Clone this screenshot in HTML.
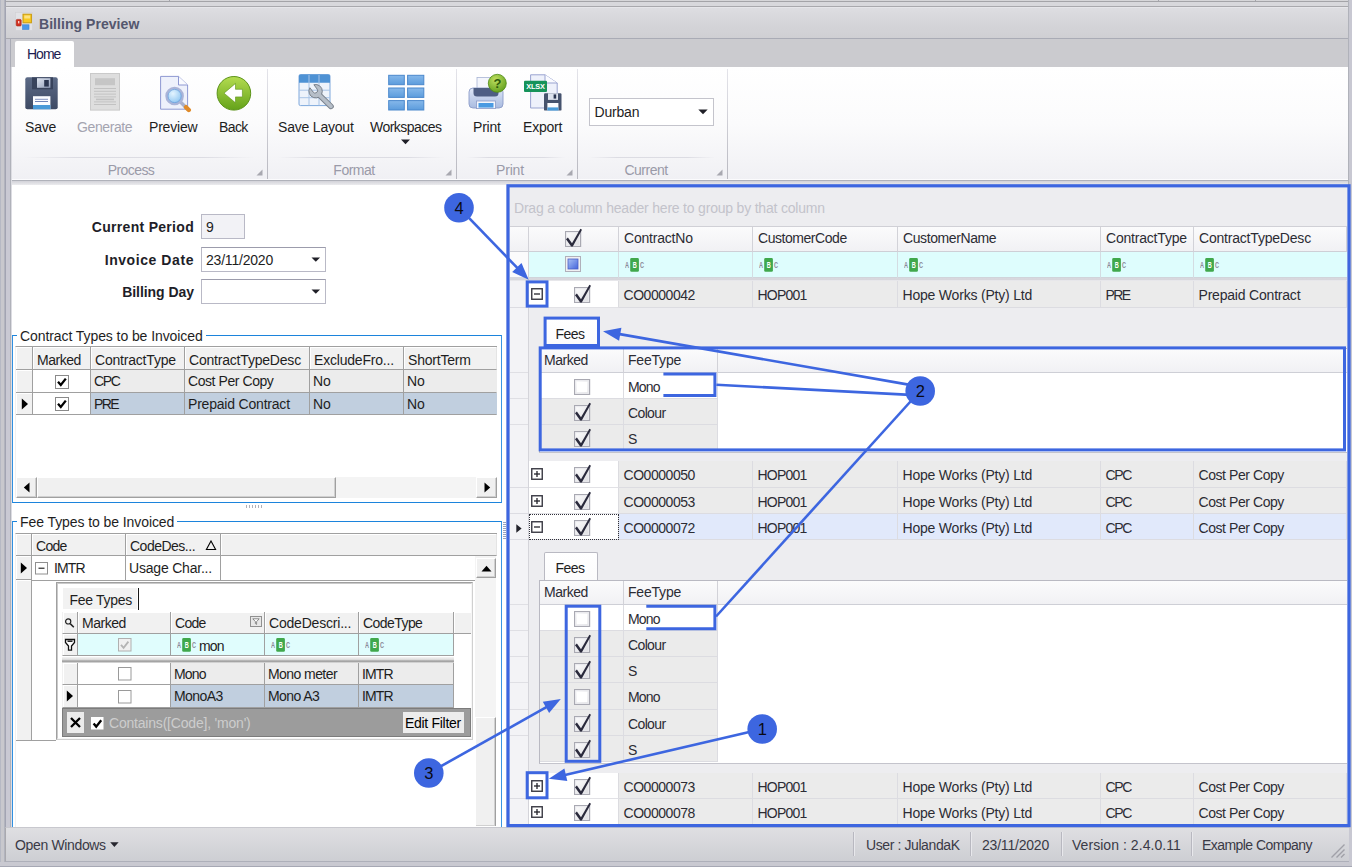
<!DOCTYPE html>
<html lang="en">
<head>
<meta charset="utf-8">
<title>Billing Preview</title>
<style>
*{box-sizing:border-box;margin:0;padding:0}
html,body{width:1352px;height:867px;overflow:hidden;background:#c8c8cd}
body{font-family:"Liberation Sans",sans-serif;font-size:13.5px;color:#1e1e1e;position:relative}
.a{position:absolute}
.t{position:absolute;white-space:nowrap;line-height:16px;height:16px}
.b{font-weight:bold}
/* frame */
#topstrip{left:5px;top:0;width:1343px;height:7px;background:#d8d8dc;border-top:1px solid #d6d6d9}
#title{left:5px;top:7px;width:1344px;height:32px;background:linear-gradient(#dedee2,#d6d6da 45%,#cfcfd3);border-left:1px solid #a9a9ae;border-right:1px solid #a9a9ae;border-bottom:1px solid #aaaab0;box-shadow:inset 0 1px 0 #e6e6ea}
#tabband{left:10px;top:39px;width:1338px;height:28px;background:#cbcbcf}
#ribbon{left:12px;top:67px;width:1336px;height:114px;background:linear-gradient(#ffffff,#fbfbfc 50%,#f0f0f4);border-bottom:1px solid #b0b2ba;box-shadow:inset 0 -1px 0 #fbfbfd}
#left{left:12px;top:183px;width:494px;height:644px;background:linear-gradient(#e4e4e8,#fff 2px)}
#right{left:506px;top:184px;width:842px;height:643px;background:#ececef}
#status{left:5px;top:827px;width:1344px;height:35px;background:linear-gradient(#dfdfe2,#cdced3);border-top:1px solid #c8c8ce;border-bottom:1px solid #aeb0ba;border-left:1px solid #a9a9ae}
.rsep{top:69px;width:1px;height:110px;background:linear-gradient(#e4e4ea,#b8b8c0)}
.rline{top:157px;height:1px;background:linear-gradient(90deg,rgba(220,220,228,0),#dcdce3 22%,#dcdce3 78%,rgba(220,220,228,0))}
.rcap{top:162px;text-align:center;color:#9a9aa8}
.rl{top:119px}
body{letter-spacing:-0.2px;font-size:14px}
.fl{text-align:right;font-size:14px;letter-spacing:0.3px;color:#1e1e28}
.ed{width:125px;height:25px;background:#fff;border:1px solid #b9b9c6;border-top-color:#9c9cac}
.gb{border:1px solid #1c84dc;border-left-color:#2f8fe0;border-right-color:#3a96e2}
.wh{background:#f1f1f1;border-right:1px solid #a0a0a0;border-bottom:1px solid #a0a0a0;box-shadow:inset 1px 1px 0 #fff}
.wh span,.wc span{position:absolute;left:4px;top:4.500px;line-height:16px;white-space:nowrap}
.wc{border-right:1px solid #a0a0a0;border-bottom:1px solid #a0a0a0}
.wc span{left:3px;top:3px}
.g1{background:#ececec}.g2{background:#c1cfdf}
.sbb{background:#f0f0f0;border:1px solid #fff;border-right-color:#a0a0a0;border-bottom-color:#a0a0a0;box-shadow:inset -1px -1px 0 #d0d0d0}
.vl{width:1px;background:#a0a0a0}
.dh{background:linear-gradient(#fbfbfc,#f1f1f4);border-right:1px solid #d2d2d8;border-bottom:1px solid #cecfd6}
.dh span,.dc span{position:absolute;left:5px;top:3px;line-height:16px;white-space:nowrap;color:#2c2c34}
.dc{background:#ebebeb;border-right:1px solid #dcdce1;border-bottom:1px solid #dcdce1}
.dc span{left:4.500px;top:5.500px}
.fo{background:#e1e9fb}
#status{z-index:5}
.st{z-index:6;color:#3a3a46}
.ss{top:832px;width:1px;height:24px;background:#b8b8c0;z-index:6;box-shadow:1px 0 0 #e8e8ec}
</style>
</head>
<body>
<div class="a" id="topstrip"></div>
<div class="a" id="title"></div>
<div class="a" id="tabband"></div>
<div class="a" id="ribbon"></div>
<div class="a" id="left"></div>
<div class="a" id="right"></div>
<div class="a" id="status"></div>
<!-- title -->
<div class="a" style="left:6px;top:39px;width:4px;height:788px;background:#c9c9d3"></div>
<div class="a" style="left:10px;top:67px;width:1px;height:760px;background:#b0b2ba"></div>
<div class="a" style="left:11px;top:67px;width:1px;height:760px;background:#dcdce2"></div>
<div class="a" style="left:0;top:0;width:1px;height:867px;background:#b6b9c4"></div>
<div class="a" style="left:4px;top:0;width:1px;height:867px;background:#b2b4be"></div>
<div class="a" style="left:5px;top:0;width:1px;height:867px;background:#a2a4b2"></div>
<div class="a" style="left:5px;top:1px;width:1343px;height:1px;background:#a4a4a8"></div>
<div class="a" style="left:5px;top:6px;width:1343px;height:1px;background:#a9a9ad"></div>
<div class="a" style="left:1348px;top:0;width:1px;height:867px;background:#b0b2ba"></div>
<div class="a" style="left:1349px;top:0;width:3px;height:867px;background:#c8c8d2"></div>
<div class="a" style="left:12px;top:181px;width:1336px;height:4px;background:linear-gradient(#d2d2d8,#ececee)"></div>
<div class="a" style="left:169px;top:0;width:1px;height:1px;background:#a4a4aa"></div><div class="a" style="left:1158px;top:0;width:1px;height:1px;background:#a4a4aa"></div><div class="a" style="left:1255px;top:0;width:1px;height:1px;background:#a4a4aa"></div>
<svg class="a" style="left:15px;top:12px" width="18" height="20" viewBox="0 0 18 20">
 <rect x="0.5" y="0.5" width="17" height="18" fill="#e2e2e6" stroke="#d0d0d4" stroke-width="0.6"/>
 <rect x="8" y="2.2" width="8.4" height="8.6" fill="#f8c820" stroke="#c89a10" stroke-width="1"/>
 <rect x="9.3" y="3.5" width="5.8" height="3" fill="#fde89a" opacity=".8"/>
 <rect x="1.2" y="7.4" width="5" height="6.6" rx="1" fill="#d03020" stroke="#a82818" stroke-width=".6"/>
 <rect x="3" y="9" width="1.4" height="2.4" fill="#fbd0c8"/>
 <rect x="7.6" y="12.8" width="6.4" height="4.6" fill="#4a98e8" stroke="#3a80d0" stroke-width=".6"/>
</svg>
<div class="t b" style="left:39px;top:15.5px;font-size:14px;color:#54576e;letter-spacing:0.05px">Billing Preview</div>
<!-- tab -->
<div class="a" style="left:10px;top:38px;width:1338px;height:1px;background:#a9abb5"></div>
<div class="a" style="left:10px;top:39px;width:1px;height:28px;background:#a9abb5"></div>
<div class="a" style="left:15px;top:41px;width:59px;height:27px;background:#fff;border-radius:2px 2px 0 0"></div>
<div class="t" style="letter-spacing:-1px;left:27px;top:46px;color:#1c1c50">Home</div>
<!-- ribbon groups -->
<div class="a rsep" style="left:267px"></div>
<div class="a rsep" style="left:456px"></div>
<div class="a rsep" style="left:577px"></div>
<div class="a rsep" style="left:727px"></div>
<div class="a rline" style="left:24px;width:230px"></div>
<div class="a rline" style="left:278px;width:166px"></div>
<div class="a rline" style="left:467px;width:98px"></div>
<div class="a rline" style="left:589px;width:126px"></div>
<div class="t rcap" style="letter-spacing:-0.6px;left:81px;width:100px">Process</div>
<div class="t rcap" style="letter-spacing:-0.5px;left:304px;width:100px">Format</div>
<div class="t rcap" style="left:460px;width:100px">Print</div>
<div class="t rcap" style="letter-spacing:-0.5px;left:596px;width:100px">Current</div>
<svg class="a" style="left:256px;top:169px" width="7" height="7"><path d="M6.5 0.5V6.5H0.5Z" fill="#a8a8b0"/></svg>
<svg class="a" style="left:445px;top:169px" width="7" height="7"><path d="M6.5 0.5V6.5H0.5Z" fill="#a8a8b0"/></svg>
<svg class="a" style="left:566px;top:169px" width="7" height="7"><path d="M6.5 0.5V6.5H0.5Z" fill="#a8a8b0"/></svg>
<svg class="a" style="left:716px;top:169px" width="7" height="7"><path d="M6.5 0.5V6.5H0.5Z" fill="#a8a8b0"/></svg>
<!-- labels -->
<div class="t rl" style="left:25px">Save</div>
<div class="t rl" style="letter-spacing:-0.4px;left:77px;color:#a4a4b0">Generate</div>
<div class="t rl" style="left:149px">Preview</div>
<div class="t rl" style="letter-spacing:-0.6px;left:219px">Back</div>
<div class="t rl" style="left:278px">Save Layout</div>
<div class="t rl" style="letter-spacing:-0.52px;left:370px">Workspaces</div>
<div class="t rl" style="left:473px">Print</div>
<div class="t rl" style="left:523px">Export</div>
<svg class="a" style="left:401px;top:139px" width="9" height="6"><path d="M0 0.5H9L4.5 5.2Z" fill="#202028"/></svg>
<!-- Save icon -->
<svg class="a" style="left:25px;top:77px" width="33" height="33" viewBox="0 0 33 33">
 <defs><linearGradient id="gsv" x1="0" y1="0" x2="0" y2="1"><stop offset="0" stop-color="#5c6a86"/><stop offset="1" stop-color="#3e4a64"/></linearGradient>
 <linearGradient id="gsm" x1="0" y1="0" x2="1" y2="1"><stop offset="0" stop-color="#dfe5f0"/><stop offset="1" stop-color="#8f9cb8"/></linearGradient></defs>
 <rect x="0.3" y="0.3" width="32.4" height="32" rx="2" fill="url(#gsv)"/>
 <rect x="7" y="0.3" width="21" height="12" fill="#38435c"/>
 <rect x="12" y="1.2" width="13.4" height="9.6" fill="url(#gsm)"/>
 <rect x="19.2" y="3" width="4.6" height="6.6" fill="#2a3550"/>
 <rect x="8" y="19.2" width="17.4" height="13.1" fill="#fbfcff"/>
 <rect x="8" y="28" width="17.4" height="4.3" fill="#4a9ad8"/>
 <rect x="10" y="21.8" width="13" height="1" fill="#8494c0"/>
 <rect x="10" y="24" width="13" height="1" fill="#7084b8"/>
</svg>
<!-- Generate icon -->
<svg class="a" style="left:90px;top:73px" width="30" height="38" viewBox="0 0 30 38">
 <rect x="0.5" y="0.5" width="29" height="36.6" fill="#dedede" stroke="#cacaca"/>
 <rect x="5" y="5.2" width="20" height="7" fill="#c6c6c6"/>
 <g fill="#c2c2c2"><rect x="4" y="15" width="22" height="1"/><rect x="4" y="17.8" width="22" height="1"/><rect x="4" y="20.6" width="22" height="1"/><rect x="4" y="23.4" width="22" height="1"/><rect x="6" y="25.6" width="18" height="1.6"/><rect x="4" y="28.4" width="22" height="1"/><rect x="4" y="31" width="22" height="1"/></g>
</svg>
<!-- Preview icon -->
<svg class="a" style="left:159px;top:75px" width="34" height="38" viewBox="0 0 34 38">
 <defs><radialGradient id="gln" cx=".4" cy=".35" r=".7"><stop offset="0" stop-color="#e4f4ff"/><stop offset="1" stop-color="#84c0f0"/></radialGradient></defs>
 <path d="M1.6 1.4H19.5L28.6 10V34.2H1.6Z" fill="#eef1fb" stroke="#8e98d2" stroke-width="1"/>
 <path d="M19.5 1.4V10H28.6" fill="#fafbff" stroke="#8e98d2" stroke-width="1"/>
 <line x1="22" y1="27.5" x2="29" y2="34.5" stroke="#a8b0cc" stroke-width="3.4" stroke-linecap="round"/>
 <line x1="27" y1="32.2" x2="29.8" y2="35" stroke="#e08a28" stroke-width="4.4" stroke-linecap="round"/>
 <circle cx="15.6" cy="21" r="8.1" fill="url(#gln)" stroke="#aab4d8" stroke-width="2.4"/>
 <circle cx="15.6" cy="21" r="6.6" fill="none" stroke="#6c9cd8" stroke-width=".8"/>
</svg>
<!-- Back icon -->
<svg class="a" style="left:216px;top:75px" width="36" height="37" viewBox="0 0 36 37">
 <defs><linearGradient id="gbk" x1="0" y1="0" x2="0" y2="1"><stop offset="0" stop-color="#b4dc50"/><stop offset="1" stop-color="#64a21a"/></linearGradient></defs>
 <circle cx="17.9" cy="18.3" r="16.8" fill="url(#gbk)" stroke="#5c941a" stroke-width="1"/>
 <path d="M8 18.2L19.5 8.4V14.3H26.4V21.9H19.5V27.8Z" fill="#fff" stroke="#5a9018" stroke-width=".6"/>
</svg>
<!-- Save Layout icon -->
<svg class="a" style="left:298px;top:74px" width="37" height="36" viewBox="0 0 37 36">
 <rect x="1" y="0.6" width="31" height="31" rx="1.5" fill="#eef3fb" stroke="#7ea8dc" stroke-width="1"/>
 <path d="M1 2Q1 .6 2.5 .6H30.5Q32 .6 32 2V8.8H1Z" fill="#4e92d4"/>
 <g stroke="#a9c4e6" stroke-width="1"><line x1="11" y1="1" x2="11" y2="31.4"/><line x1="21" y1="1" x2="21" y2="31.4"/><line x1="1" y1="16.2" x2="32" y2="16.2"/><line x1="1" y1="23.7" x2="32" y2="23.7"/></g>
 <line x1="20.5" y1="20.2" x2="33" y2="32.4" stroke="#79818c" stroke-width="5.600" stroke-linecap="round"/><path d="M15.87 10.73A6.7 6.7 0 1 1 11.87 13.73L15.12 18.06A2.5 2.5 0 0 0 19.12 15.06Z" fill="#b6bec8" stroke="#79818c" stroke-width="1"/><line x1="20.5" y1="20.2" x2="33" y2="32.4" stroke="#b6bec8" stroke-width="3.700" stroke-linecap="round"/>
</svg>
<!-- Workspaces icon -->
<svg class="a" style="left:388px;top:74px" width="37" height="37" viewBox="0 0 37 37">
 <defs><linearGradient id="gws" x1="0" y1="0" x2="0" y2="1"><stop offset="0" stop-color="#86b8ea"/><stop offset="1" stop-color="#5c9cdc"/></linearGradient></defs>
 <g fill="url(#gws)" stroke="#4a88cc" stroke-width="1">
 <rect x="0.7" y="1.3" width="15.6" height="9.4"/><rect x="19.6" y="1.3" width="16.2" height="9.4"/>
 <rect x="0.7" y="14" width="15.6" height="9.4"/><rect x="19.6" y="14" width="16.2" height="9.4"/>
 <rect x="0.7" y="26.6" width="15.6" height="9.4"/><rect x="19.6" y="26.6" width="16.2" height="9.4"/></g>
</svg>
<!-- Print icon -->
<svg class="a" style="left:468px;top:73px" width="40" height="38" viewBox="0 0 40 38">
 <defs><linearGradient id="gpr" x1="0" y1="0" x2="0" y2="1"><stop offset="0" stop-color="#dfe7f7"/><stop offset="1" stop-color="#a9bbe0"/></linearGradient>
 <radialGradient id="gq" cx=".4" cy=".3" r=".8"><stop offset="0" stop-color="#c0e060"/><stop offset="1" stop-color="#5a9a18"/></radialGradient></defs>
 <rect x="9" y="4.4" width="18" height="13" fill="#f4f6fc" stroke="#a8b4d4" stroke-width=".8"/>
 <rect x="1" y="15" width="34" height="20" rx="4" fill="url(#gpr)" stroke="#8c9cc8" stroke-width=".9"/>
 <path d="M5.5 15H30.5V20Q30.5 23.6 27 23.6H9Q5.500 23.6 5.500 20Z" fill="#4e5e84"/>
 <rect x="8.500" y="28" width="19" height="7.6" fill="#f4f6fc" stroke="#8c9cc8" stroke-width=".8"/>
 <rect x="10.5" y="30" width="15" height="4.600" fill="#4a9ae2"/>
 <circle cx="29.3" cy="10.3" r="9" fill="url(#gq)" stroke="#4e8a14" stroke-width=".8"/>
 <text x="29.3" y="15" font-family="Liberation Sans,sans-serif" font-size="13" font-weight="bold" text-anchor="middle" fill="#2e5a0c">?</text>
</svg>
<!-- Export icon -->
<svg class="a" style="left:523px;top:74px" width="40" height="38" viewBox="0 0 40 38">
 <path d="M7.600 .8H22L34.2 9V34H7.600Z" fill="#eef1fb" stroke="#99a3d0" stroke-width="1"/>
 <path d="M22 .8V9H34.2" fill="#fafbff" stroke="#99a3d0" stroke-width="1"/>
 <rect x="1" y="6.800" width="23" height="11.2" rx="1" fill="#16935a"/>
 <text x="3.200" y="15.200" font-family="Liberation Sans,sans-serif" font-size="7.600" font-weight="bold" fill="#fff" lengthAdjust="spacingAndGlyphs" textLength="18.400">XLSX</text>
 <rect x="21" y="19.3" width="17.5" height="17.3" rx="1.2" fill="#46536e"/>
 <rect x="25" y="19.3" width="10" height="6.600" fill="#dde3ee"/>
 <rect x="30.6" y="20.4" width="2.600" height="4.200" fill="#2a3550"/>
 <rect x="24.4" y="29" width="11" height="7.600" fill="#fbfcff"/>
 <rect x="24.4" y="33.4" width="11" height="3.200" fill="#4a9ad8"/>
</svg>
<!-- combo -->
<div class="a" style="left:589px;top:98px;width:125px;height:28px;background:#fff;border:1px solid #c4c4cc"></div>
<div class="t" style="left:594.500px;top:104px">Durban</div>
<svg class="a" style="left:698px;top:109px" width="10" height="6"><path d="M0.3 0.5H9.700L5 5.3Z" fill="#202028"/></svg>
<!-- form -->
<div class="t b fl" style="left:41px;top:219px;width:153px">Current Period</div>
<div class="t b fl" style="letter-spacing:0.57px;left:41px;top:251.500px;width:153px">Invoice Date</div>
<div class="t b fl" style="letter-spacing:-0.05px;left:41px;top:284px;width:153px">Billing Day</div>
<div class="a" style="left:201px;top:214px;width:44px;height:25px;background:#f2f2f6;border:1px solid #b9b9c6"></div>
<div class="a ed" style="left:201px;top:247px"></div>
<div class="a ed" style="left:201px;top:279px"></div>
<div class="t" style="left:206px;top:219px">9</div>
<div class="t" style="left:206px;top:252px">23/11/2020</div>
<svg class="a" style="left:311px;top:257px" width="10" height="6"><path d="M0.5 0.4H9.1L4.8 4.800Z" fill="#202028"/></svg>
<svg class="a" style="left:311px;top:289px" width="10" height="6"><path d="M0.5 0.4H9.1L4.8 4.800Z" fill="#202028"/></svg>
<!-- group 1 -->
<div class="a gb" style="left:12px;top:335px;width:490px;height:168px"></div>
<div class="t" style="left:17px;top:328px;background:#fff;padding:0 3px;letter-spacing:-0.08px">Contract Types to be Invoiced</div>
<div class="a" style="left:15px;top:346px;width:482px;height:152px;background:#fff;border-top:1px solid #a0a0a0;border-left:1px solid #f1f1f1"></div>
<!-- header -->
<div class="a wh" style="left:16px;top:347px;width:17px;height:23px"></div>
<div class="a wh" style="left:33px;top:347px;width:58px;height:23px"><span style="letter-spacing:-0.48px">Marked</span></div>
<div class="a wh" style="left:91px;top:347px;width:94px;height:23px"><span>ContractType</span></div>
<div class="a wh" style="left:185px;top:347px;width:125px;height:23px"><span>ContractTypeDesc</span></div>
<div class="a wh" style="left:310px;top:347px;width:94px;height:23px"><span>ExcludeFro...</span></div>
<div class="a wh" style="left:404px;top:347px;width:93px;height:23px;border-right-color:#e4e4e4"><span>ShortTerm</span></div>
<!-- row1 -->
<div class="a wh" style="left:16px;top:370px;width:17px;height:23px"></div>
<div class="a wc" style="left:33px;top:370px;width:58px;height:23px;background:#fff"></div>
<div class="a wc g1" style="left:91px;top:370px;width:94px;height:23px"><span style="letter-spacing:-1.4px">CPC</span></div>
<div class="a wc g1" style="left:185px;top:370px;width:125px;height:23px"><span style="letter-spacing:-0.43px">Cost Per Copy</span></div>
<div class="a wc g1" style="left:310px;top:370px;width:94px;height:23px"><span>No</span></div>
<div class="a wc g1" style="left:404px;top:370px;width:93px;height:23px;border-right-color:#ececec"><span>No</span></div>
<!-- row2 -->
<div class="a wh" style="left:16px;top:393px;width:17px;height:22px"></div>
<div class="a wc" style="left:33px;top:393px;width:58px;height:22px;background:#fff"></div>
<div class="a wc g2" style="left:91px;top:393px;width:94px;height:22px"><span style="letter-spacing:-1.6px">PRE</span></div>
<div class="a wc g2" style="left:185px;top:393px;width:125px;height:22px"><span>Prepaid Contract</span></div>
<div class="a wc g2" style="left:310px;top:393px;width:94px;height:22px"><span>No</span></div>
<div class="a wc g2" style="left:404px;top:393px;width:93px;height:22px;border-right-color:#c1cfdf"><span>No</span></div>
<svg class="a" style="left:21px;top:398px" width="8" height="12"><path d="M0.8 0.6L7 6L0.8 11.4Z" fill="#000"/></svg>
<svg class="a ck" style="left:55px;top:375px" width="14" height="14"><rect x=".5" y=".5" width="13" height="13" fill="#fff" stroke="#8a8a8a"/><path d="M3 6.800L5.800 10L10.800 3.600" fill="none" stroke="#000" stroke-width="2.300"/></svg>
<svg class="a ck" style="left:55px;top:397px" width="14" height="14"><rect x=".5" y=".5" width="13" height="13" fill="#fff" stroke="#8a8a8a"/><path d="M3 6.800L5.800 10L10.800 3.600" fill="none" stroke="#000" stroke-width="2.300"/></svg>
<!-- hscroll -->
<div class="a" style="left:16px;top:477px;width:481px;height:21px;background:#f4f4f4"></div>
<div class="a sbb" style="left:16px;top:477px;width:21px;height:21px"></div>
<div class="a sbb" style="left:37px;top:477px;width:299px;height:21px"></div>
<div class="a sbb" style="left:476px;top:477px;width:21px;height:21px"></div>
<svg class="a" style="left:23px;top:482px" width="7" height="11"><path d="M6.500 0.5L0.8 5.500L6.500 10.500Z" fill="#000"/></svg>
<svg class="a" style="left:484px;top:482px" width="7" height="11"><path d="M0.5 0.5L6.200 5.500L0.5 10.500Z" fill="#000"/></svg>
<!-- splitter grips -->
<div class="a" style="left:246px;top:505px;width:17px;height:3px;background:repeating-linear-gradient(90deg,#b0b0b8 0 1px,#fff 1px 3px)"></div>
<div class="a" style="left:503px;top:522px;width:3px;height:17px;background:repeating-linear-gradient(180deg,#9aa2bc 0 1px,#fff 1px 2px)"></div>
<!-- group 2 -->
<div class="a gb" style="left:12px;top:521px;width:490px;height:320px"></div>
<div class="t" style="left:17px;top:514px;background:#fff;padding:0 3px;letter-spacing:-0.08px">Fee Types to be Invoiced</div>
<div class="a" style="left:15px;top:533px;width:482px;height:294px;background:#fff;border-top:1px solid #a0a0a0;border-left:1px solid #f1f1f1"></div>
<div class="a wh" style="left:16px;top:534px;width:16px;height:22px"></div>
<div class="a wh" style="left:32px;top:534px;width:94px;height:22px"><span style="letter-spacing:-0.7px;top:3.500px">Code</span></div>
<div class="a wh" style="left:126px;top:534px;width:95px;height:22px"><span style="letter-spacing:-0.5px;top:3.500px">CodeDes...</span></div>
<div class="a wh" style="left:221px;top:534px;width:276px;height:22px;border-right-color:#e4e4e4"></div>
<svg class="a" style="left:205px;top:540px" width="12" height="11"><path d="M6 1L10.600 9.500H1.400Z" fill="none" stroke="#000" stroke-width="1.100"/></svg>
<div class="a wh" style="left:16px;top:556px;width:16px;height:24px"></div>
<div class="a wh" style="left:16px;top:580px;width:16px;height:161px;border-bottom-color:#a0a0a0"></div>
<div class="a" style="left:32px;top:740px;width:24px;height:1px;background:#a0a0a0"></div>
<div class="a" style="left:125px;top:556px;width:1px;height:24px;background:#a0a0a0"></div>
<div class="a" style="left:220px;top:556px;width:1px;height:24px;background:#a0a0a0"></div>
<svg class="a" style="left:20px;top:562px" width="8" height="12"><path d="M0.8 0.6L7 6L0.8 11.4Z" fill="#000"/></svg>
<svg class="a" style="left:35px;top:562px" width="13" height="13"><rect x=".5" y=".5" width="12" height="11.500" fill="#fff" stroke="#909090"/><path d="M3.500 6.200H9.500" stroke="#000" stroke-width="1"/></svg>
<div class="t" style="letter-spacing:-0.9px;left:54px;top:560px">IMTR</div>
<div class="t" style="left:129px;top:560px">Usage Char...</div>
<!-- vscroll -->
<div class="a" style="left:475px;top:556px;width:21px;height:270px;background:#f4f4f4"></div>
<div class="a sbb" style="left:476px;top:558px;width:20px;height:20px"></div>
<div class="a sbb" style="left:475px;top:717px;width:21px;height:109px;border-bottom:0"></div>
<svg class="a" style="left:480.500px;top:564.500px" width="11" height="7"><path d="M0.5 6.500L5.500 0.8L10.500 6.500Z" fill="#000"/></svg>
<!-- detail panel -->
<div class="a" style="left:32px;top:580px;width:443px;height:1px;background:#a0a0a0"></div>
<div class="a" style="left:56px;top:582px;width:417px;height:158px;background:#fff;border:1px solid #a0a0a0;border-right-color:#d0d0d0;border-bottom-color:#d0d0d0"></div>
<div class="a" style="left:57px;top:583px;width:415px;height:156px;border:1px solid #696969;border-right-color:#e8e8e8;border-bottom-color:#e8e8e8;opacity:.35"></div>
<div class="a" style="left:63px;top:588px;width:74px;height:21px;background:#f2f2f2"></div><div class="a" style="left:137.500px;top:588px;width:1.500px;height:22px;background:#181818"></div>
<div class="t" style="left:69.500px;top:591.500px;letter-spacing:-0.3px">Fee Types</div>
<!-- detail header -->
<div class="a wh" style="left:62px;top:612px;width:16px;height:22px;border-left:1px solid #f1f1f1"></div>
<div class="a wh" style="left:78px;top:612px;width:93px;height:22px"><span style="letter-spacing:-0.48px;top:2.500px">Marked</span></div>
<div class="a wh" style="left:171px;top:612px;width:94px;height:22px"><span style="letter-spacing:-0.7px;top:2.500px">Code</span></div>
<div class="a wh" style="left:265px;top:612px;width:94px;height:22px"><span style="top:2.500px">CodeDescri...</span></div>
<div class="a wh" style="left:359px;top:612px;width:95px;height:22px"><span style="letter-spacing:-0.56px;top:2.500px">CodeType</span></div>
<div class="a wh" style="left:454px;top:612px;width:17px;height:22px;border-right:0"></div>
<svg class="a" style="left:64px;top:617px" width="12" height="12"><circle cx="4.200" cy="4.400" r="2.600" fill="none" stroke="#202020" stroke-width="1.200"/><path d="M6.200 6.600L9.800 10.200" stroke="#202020" stroke-width="1.500"/></svg>
<svg class="a" style="left:250px;top:616px" width="12" height="11"><rect x=".5" y=".5" width="11" height="10" fill="#e8e8e8" stroke="#909090"/><path d="M2.800 2.800H9.200L6.600 5.600V8.400L5.400 7.600V5.600Z" fill="#fff" stroke="#707070" stroke-width=".8"/></svg>
<!-- filter row -->
<div class="a" style="left:78px;top:634px;width:376px;height:22px;background:#e0fdfd;border-bottom:1px solid #a0a0a0"></div>
<div class="a wh" style="left:62px;top:634px;width:16px;height:22px;border-left:1px solid #f1f1f1"></div>
<div class="a vl" style="left:170px;top:634px;height:22px"></div>
<div class="a vl" style="left:264px;top:634px;height:22px"></div>
<div class="a vl" style="left:358px;top:634px;height:22px"></div>
<div class="a vl" style="left:453px;top:634px;height:22px"></div>
<svg class="a" style="left:64px;top:638px" width="12" height="14"><path d="M1.500 1.500H10.500V4.500L7.500 8V12.200H4.500V8L1.500 4.500Z" fill="#fff" stroke="#101010" stroke-width="1.300"/><path d="M3.500 3.200H8.500" stroke="#101010" stroke-width="1.400"/></svg>
<svg class="a" style="left:118px;top:638px" width="14" height="14"><rect x=".5" y=".5" width="12.500" height="12.500" fill="#f0f0f0" stroke="#b0b0b0"/><path d="M3 6.800L5.600 9.800L10.400 3.600" fill="none" stroke="#b4b4b4" stroke-width="1.800"/></svg>
<svg class="a" style="left:177.300px;top:638.200px" width="20" height="14"><rect x="5.200" y=".1" width="8.700" height="13.700" rx="1.300" fill="#40a84c"/><text x="0" y="10" font-family="Liberation Sans,sans-serif" font-size="8.400" font-weight="bold" lengthAdjust="spacingAndGlyphs" textLength="3.900" fill="#8a8a98">A</text><text x="7.700" y="10" font-family="Liberation Sans,sans-serif" font-size="8.400" font-weight="bold" lengthAdjust="spacingAndGlyphs" textLength="3.900" fill="#fff">B</text><text x="15.100" y="10" font-family="Liberation Sans,sans-serif" font-size="8.400" font-weight="bold" lengthAdjust="spacingAndGlyphs" textLength="3.900" fill="#8a8a98">C</text></svg>
<svg class="a" style="left:271.300px;top:638.200px" width="20" height="14"><rect x="5.200" y=".1" width="8.700" height="13.700" rx="1.300" fill="#40a84c"/><text x="0" y="10" font-family="Liberation Sans,sans-serif" font-size="8.400" font-weight="bold" lengthAdjust="spacingAndGlyphs" textLength="3.900" fill="#8a8a98">A</text><text x="7.700" y="10" font-family="Liberation Sans,sans-serif" font-size="8.400" font-weight="bold" lengthAdjust="spacingAndGlyphs" textLength="3.900" fill="#fff">B</text><text x="15.100" y="10" font-family="Liberation Sans,sans-serif" font-size="8.400" font-weight="bold" lengthAdjust="spacingAndGlyphs" textLength="3.900" fill="#8a8a98">C</text></svg>
<svg class="a" style="left:365.300px;top:638.200px" width="20" height="14"><rect x="5.200" y=".1" width="8.700" height="13.700" rx="1.300" fill="#40a84c"/><text x="0" y="10" font-family="Liberation Sans,sans-serif" font-size="8.400" font-weight="bold" lengthAdjust="spacingAndGlyphs" textLength="3.900" fill="#8a8a98">A</text><text x="7.700" y="10" font-family="Liberation Sans,sans-serif" font-size="8.400" font-weight="bold" lengthAdjust="spacingAndGlyphs" textLength="3.900" fill="#fff">B</text><text x="15.100" y="10" font-family="Liberation Sans,sans-serif" font-size="8.400" font-weight="bold" lengthAdjust="spacingAndGlyphs" textLength="3.900" fill="#8a8a98">C</text></svg>
<div class="t" style="letter-spacing:-0.9px;left:199px;top:637.500px">mon</div>
<!-- sep -->
<div class="a" style="left:62px;top:657px;width:392px;height:6px;background:linear-gradient(#f4f4f4,#e0e0e0 40%,#9a9a9a 70%,#b8b8b8 85%,#f0f0f0)"></div>
<!-- rows -->
<div class="a wh" style="left:62px;top:663px;width:16px;height:22px;border-left:1px solid #f1f1f1"></div>
<div class="a wc" style="left:78px;top:663px;width:93px;height:22px;background:#fff"></div>
<div class="a wc g1" style="left:171px;top:663px;width:94px;height:22px"><span style="letter-spacing:-0.8px">Mono</span></div>
<div class="a wc g1" style="left:265px;top:663px;width:94px;height:22px"><span style="letter-spacing:-0.57px">Mono meter</span></div>
<div class="a wc g1" style="left:359px;top:663px;width:95px;height:22px"><span style="letter-spacing:-0.9px">IMTR</span></div>
<div class="a wh" style="left:62px;top:685px;width:16px;height:23px;border-left:1px solid #f1f1f1"></div>
<div class="a wc" style="left:78px;top:685px;width:93px;height:23px;background:#fff"></div>
<div class="a wc g2" style="left:171px;top:685px;width:94px;height:23px"><span style="letter-spacing:-0.55px">MonoA3</span></div>
<div class="a wc g2" style="left:265px;top:685px;width:94px;height:23px"><span style="letter-spacing:-0.6px">Mono A3</span></div>
<div class="a wc g2" style="left:359px;top:685px;width:95px;height:23px"><span style="letter-spacing:-0.9px">IMTR</span></div>
<svg class="a" style="left:66px;top:690px" width="8" height="12"><path d="M0.8 0.6L7 6L0.8 11.4Z" fill="#000"/></svg>
<svg class="a" style="left:118px;top:667px" width="14" height="14"><rect x=".5" y=".5" width="12.500" height="12.500" fill="#fff" stroke="#9a9a9a"/></svg>
<svg class="a" style="left:118px;top:690px" width="14" height="14"><rect x=".5" y=".5" width="12.500" height="12.500" fill="#fff" stroke="#9a9a9a"/></svg>
<!-- filter panel -->
<div class="a" style="left:62px;top:708px;width:409px;height:29px;background:#9c9c9c;border:1px solid #7c7c7c"></div>
<div class="a" style="left:67px;top:712px;width:17px;height:21px;background:#ececec"></div>
<svg class="a" style="left:70px;top:717px" width="11" height="11"><path d="M1 1L10 10M10 1L1 10" stroke="#000" stroke-width="2.300"/></svg>
<svg class="a" style="left:91px;top:717px" width="13" height="13"><rect x="0" y="0" width="12.500" height="12.500" fill="#fff"/><path d="M2.600 6.400L5.200 9.600L10.200 3.200" fill="none" stroke="#000" stroke-width="2.300"/></svg>
<div class="t" style="left:109px;top:714.500px;color:#cdcdcd">Contains([Code], 'mon')</div>
<div class="a" style="left:403px;top:712px;width:61px;height:21px;background:#ececec"></div>
<div class="t" style="left:405px;top:714.500px;color:#000;letter-spacing:-0.3px">Edit Filter</div>
<div class="a" style="left:510px;top:187px;width:837px;height:637px;background:#ededf0"></div>
<div class="t" style="left:514px;top:199.500px;color:#c3c3cb">Drag a column header here to group by that column</div>
<div class="a" style="left:510px;top:226px;width:19px;height:598px;background:#f3f3f6;border-right:1px solid #d4d4da"></div>
<div class="a" style="left:510px;top:226px;width:837px;height:1px;background:#d0d0d6"></div>
<div class="a dh" style="left:510px;top:227px;width:19px;height:25px"></div>
<div class="a dh" style="left:529px;top:227px;width:90px;height:25px"></div>
<div class="a dh" style="left:619px;top:227px;width:134px;height:25px"><span>ContractNo</span></div>
<div class="a dh" style="left:753px;top:227px;width:145px;height:25px"><span style="letter-spacing:-0.45px">CustomerCode</span></div>
<div class="a dh" style="left:898px;top:227px;width:203px;height:25px"><span style="letter-spacing:-0.4px">CustomerName</span></div>
<div class="a dh" style="left:1101px;top:227px;width:93px;height:25px"><span>ContractType</span></div>
<div class="a dh" style="left:1194px;top:227px;width:153px;height:25px"><span>ContractTypeDesc</span></div>
<svg class="a" style="left:565px;top:227px" width="19" height="21"><defs><linearGradient id="gck" x1="0" y1="0" x2="1" y2="1"><stop offset="0" stop-color="#ffffff"/><stop offset="1" stop-color="#dcdce0"/></linearGradient></defs><rect x=".6" y="4.600" width="15" height="14.800" fill="url(#gck)" stroke="#a9a9b2" stroke-width="1.200"/><rect x="1.700" y="5.700" width="12.800" height="12.600" fill="none" stroke="#ebebef"/><path d="M1 12.200L2.900 10.600L7 16.200L15.400 1.800L17 2.800L7.800 19.400H6.200Z" fill="#2a2a3c"/></svg>
<div class="a" style="left:529px;top:252px;width:818px;height:26px;background:#defdfd;border-bottom:1px solid #d0d4da"></div>
<div class="a" style="left:510px;top:252px;width:18px;height:26px;background:#fbfbfc;border-bottom:1px solid #d8d8de"></div>
<div class="a" style="left:618px;top:252px;width:1px;height:26px;background:#d4dce2"></div>
<div class="a" style="left:752px;top:252px;width:1px;height:26px;background:#d4dce2"></div>
<div class="a" style="left:897px;top:252px;width:1px;height:26px;background:#d4dce2"></div>
<div class="a" style="left:1100px;top:252px;width:1px;height:26px;background:#d4dce2"></div>
<div class="a" style="left:1193px;top:252px;width:1px;height:26px;background:#d4dce2"></div>
<svg class="a" style="left:625px;top:258px" width="20" height="14"><rect x="5.200" y=".1" width="8.700" height="13.700" rx="1.300" fill="#40a84c"/><text x="0" y="10" font-family="Liberation Sans,sans-serif" font-size="8.400" font-weight="bold" lengthAdjust="spacingAndGlyphs" textLength="3.900" fill="#8a8a98">A</text><text x="7.700" y="10" font-family="Liberation Sans,sans-serif" font-size="8.400" font-weight="bold" lengthAdjust="spacingAndGlyphs" textLength="3.900" fill="#fff">B</text><text x="15.100" y="10" font-family="Liberation Sans,sans-serif" font-size="8.400" font-weight="bold" lengthAdjust="spacingAndGlyphs" textLength="3.900" fill="#8a8a98">C</text></svg>
<svg class="a" style="left:759px;top:258px" width="20" height="14"><rect x="5.200" y=".1" width="8.700" height="13.700" rx="1.300" fill="#40a84c"/><text x="0" y="10" font-family="Liberation Sans,sans-serif" font-size="8.400" font-weight="bold" lengthAdjust="spacingAndGlyphs" textLength="3.900" fill="#8a8a98">A</text><text x="7.700" y="10" font-family="Liberation Sans,sans-serif" font-size="8.400" font-weight="bold" lengthAdjust="spacingAndGlyphs" textLength="3.900" fill="#fff">B</text><text x="15.100" y="10" font-family="Liberation Sans,sans-serif" font-size="8.400" font-weight="bold" lengthAdjust="spacingAndGlyphs" textLength="3.900" fill="#8a8a98">C</text></svg>
<svg class="a" style="left:904px;top:258px" width="20" height="14"><rect x="5.200" y=".1" width="8.700" height="13.700" rx="1.300" fill="#40a84c"/><text x="0" y="10" font-family="Liberation Sans,sans-serif" font-size="8.400" font-weight="bold" lengthAdjust="spacingAndGlyphs" textLength="3.900" fill="#8a8a98">A</text><text x="7.700" y="10" font-family="Liberation Sans,sans-serif" font-size="8.400" font-weight="bold" lengthAdjust="spacingAndGlyphs" textLength="3.900" fill="#fff">B</text><text x="15.100" y="10" font-family="Liberation Sans,sans-serif" font-size="8.400" font-weight="bold" lengthAdjust="spacingAndGlyphs" textLength="3.900" fill="#8a8a98">C</text></svg>
<svg class="a" style="left:1107px;top:258px" width="20" height="14"><rect x="5.200" y=".1" width="8.700" height="13.700" rx="1.300" fill="#40a84c"/><text x="0" y="10" font-family="Liberation Sans,sans-serif" font-size="8.400" font-weight="bold" lengthAdjust="spacingAndGlyphs" textLength="3.900" fill="#8a8a98">A</text><text x="7.700" y="10" font-family="Liberation Sans,sans-serif" font-size="8.400" font-weight="bold" lengthAdjust="spacingAndGlyphs" textLength="3.900" fill="#fff">B</text><text x="15.100" y="10" font-family="Liberation Sans,sans-serif" font-size="8.400" font-weight="bold" lengthAdjust="spacingAndGlyphs" textLength="3.900" fill="#8a8a98">C</text></svg>
<svg class="a" style="left:1200px;top:258px" width="20" height="14"><rect x="5.200" y=".1" width="8.700" height="13.700" rx="1.300" fill="#40a84c"/><text x="0" y="10" font-family="Liberation Sans,sans-serif" font-size="8.400" font-weight="bold" lengthAdjust="spacingAndGlyphs" textLength="3.900" fill="#8a8a98">A</text><text x="7.700" y="10" font-family="Liberation Sans,sans-serif" font-size="8.400" font-weight="bold" lengthAdjust="spacingAndGlyphs" textLength="3.900" fill="#fff">B</text><text x="15.100" y="10" font-family="Liberation Sans,sans-serif" font-size="8.400" font-weight="bold" lengthAdjust="spacingAndGlyphs" textLength="3.900" fill="#8a8a98">C</text></svg>
<svg class="a" style="left:565px;top:256px" width="17" height="17"><defs><linearGradient id="gbl" x1="0" y1="0" x2="1" y2="1"><stop offset="0" stop-color="#a8c0f4"/><stop offset="1" stop-color="#4464dc"/></linearGradient></defs><rect x=".5" y=".5" width="15" height="15" fill="#f0f0f2" stroke="#b0b0ba"/><rect x="3" y="3" width="10" height="10" fill="url(#gbl)" stroke="#4a60c8" stroke-width=".8"/></svg>
<div class="a" style="left:510px;top:278px;width:837px;height:3px;background:linear-gradient(#dcdce2,#d2d2d8 40%,#efeff2)"></div>
<div class="a" style="left:510px;top:307px;width:18px;height:1px;background:#dcdce2"></div>
<div class="a" style="left:529px;top:281px;width:90px;height:27px;background:#fff;border-bottom:1px solid #e2e2e6;border-right:1px solid #dcdce0"></div>
<div class="a dc" style="left:619px;top:281px;width:134px;height:27px"><span style="letter-spacing:-0.46px">CO0000042</span></div>
<div class="a dc" style="left:753px;top:281px;width:145px;height:27px"><span style="letter-spacing:-0.77px">HOP001</span></div>
<div class="a dc" style="left:898px;top:281px;width:203px;height:27px"><span>Hope Works (Pty) Ltd</span></div>
<div class="a dc" style="left:1101px;top:281px;width:93px;height:27px"><span style="letter-spacing:-1.6px">PRE</span></div>
<div class="a dc" style="left:1194px;top:281px;width:153px;height:27px"><span>Prepaid Contract</span></div>
<svg class="a" style="left:531px;top:288px" width="12" height="12"><rect x=".75" y=".75" width="10.500" height="10.500" fill="#fff" stroke="#3a3a44" stroke-width="1.400"/><path d="M3 6H9" stroke="#22222a" stroke-width="1.300"/></svg>
<svg class="a" style="left:574px;top:282.5px" width="19" height="21"><defs><linearGradient id="gck" x1="0" y1="0" x2="1" y2="1"><stop offset="0" stop-color="#ffffff"/><stop offset="1" stop-color="#dcdce0"/></linearGradient></defs><rect x=".6" y="4.600" width="15" height="14.800" fill="url(#gck)" stroke="#a9a9b2" stroke-width="1.200"/><rect x="1.700" y="5.700" width="12.800" height="12.600" fill="none" stroke="#ebebef"/><path d="M1 12.200L2.900 10.600L7 16.200L15.400 1.800L17 2.800L7.800 19.400H6.200Z" fill="#2a2a3c"/></svg>
<div class="a" style="left:510px;top:487px;width:18px;height:1px;background:#dcdce2"></div>
<div class="a" style="left:529px;top:461px;width:90px;height:27px;background:#fff;border-bottom:1px solid #e2e2e6;border-right:1px solid #dcdce0"></div>
<div class="a dc" style="left:619px;top:461px;width:134px;height:27px"><span style="letter-spacing:-0.46px">CO0000050</span></div>
<div class="a dc" style="left:753px;top:461px;width:145px;height:27px"><span style="letter-spacing:-0.77px">HOP001</span></div>
<div class="a dc" style="left:898px;top:461px;width:203px;height:27px"><span>Hope Works (Pty) Ltd</span></div>
<div class="a dc" style="left:1101px;top:461px;width:93px;height:27px"><span style="letter-spacing:-1.4px">CPC</span></div>
<div class="a dc" style="left:1194px;top:461px;width:153px;height:27px"><span style="letter-spacing:-0.43px">Cost Per Copy</span></div>
<svg class="a" style="left:531px;top:468px" width="12" height="12"><rect x=".75" y=".75" width="10.500" height="10.500" fill="#fff" stroke="#3a3a44" stroke-width="1.400"/><path d="M3 6H9" stroke="#22222a" stroke-width="1.300"/><path d="M6 3V9" stroke="#22222a" stroke-width="1.300"/></svg>
<svg class="a" style="left:574px;top:462.5px" width="19" height="21"><defs><linearGradient id="gck" x1="0" y1="0" x2="1" y2="1"><stop offset="0" stop-color="#ffffff"/><stop offset="1" stop-color="#dcdce0"/></linearGradient></defs><rect x=".6" y="4.600" width="15" height="14.800" fill="url(#gck)" stroke="#a9a9b2" stroke-width="1.200"/><rect x="1.700" y="5.700" width="12.800" height="12.600" fill="none" stroke="#ebebef"/><path d="M1 12.200L2.900 10.600L7 16.200L15.400 1.800L17 2.800L7.800 19.400H6.200Z" fill="#2a2a3c"/></svg>
<div class="a" style="left:510px;top:513px;width:18px;height:1px;background:#dcdce2"></div>
<div class="a" style="left:529px;top:488px;width:90px;height:26px;background:#fff;border-bottom:1px solid #e2e2e6;border-right:1px solid #dcdce0"></div>
<div class="a dc" style="left:619px;top:488px;width:134px;height:26px"><span style="letter-spacing:-0.46px">CO0000053</span></div>
<div class="a dc" style="left:753px;top:488px;width:145px;height:26px"><span style="letter-spacing:-0.77px">HOP001</span></div>
<div class="a dc" style="left:898px;top:488px;width:203px;height:26px"><span>Hope Works (Pty) Ltd</span></div>
<div class="a dc" style="left:1101px;top:488px;width:93px;height:26px"><span style="letter-spacing:-1.4px">CPC</span></div>
<div class="a dc" style="left:1194px;top:488px;width:153px;height:26px"><span style="letter-spacing:-0.43px">Cost Per Copy</span></div>
<svg class="a" style="left:531px;top:495px" width="12" height="12"><rect x=".75" y=".75" width="10.500" height="10.500" fill="#fff" stroke="#3a3a44" stroke-width="1.400"/><path d="M3 6H9" stroke="#22222a" stroke-width="1.300"/><path d="M6 3V9" stroke="#22222a" stroke-width="1.300"/></svg>
<svg class="a" style="left:574px;top:489.5px" width="19" height="21"><defs><linearGradient id="gck" x1="0" y1="0" x2="1" y2="1"><stop offset="0" stop-color="#ffffff"/><stop offset="1" stop-color="#dcdce0"/></linearGradient></defs><rect x=".6" y="4.600" width="15" height="14.800" fill="url(#gck)" stroke="#a9a9b2" stroke-width="1.200"/><rect x="1.700" y="5.700" width="12.800" height="12.600" fill="none" stroke="#ebebef"/><path d="M1 12.200L2.900 10.600L7 16.200L15.400 1.800L17 2.800L7.800 19.400H6.200Z" fill="#2a2a3c"/></svg>
<div class="a" style="left:510px;top:539px;width:18px;height:1px;background:#dcdce2"></div>
<div class="a" style="left:529px;top:514px;width:90px;height:26px;background:#fff;border-bottom:1px solid #e2e2e6;border-right:1px solid #dcdce0"></div>
<div class="a dc fo" style="left:619px;top:514px;width:134px;height:26px"><span style="letter-spacing:-0.46px">CO0000072</span></div>
<div class="a dc fo" style="left:753px;top:514px;width:145px;height:26px"><span style="letter-spacing:-0.77px">HOP001</span></div>
<div class="a dc fo" style="left:898px;top:514px;width:203px;height:26px"><span>Hope Works (Pty) Ltd</span></div>
<div class="a dc fo" style="left:1101px;top:514px;width:93px;height:26px"><span style="letter-spacing:-1.4px">CPC</span></div>
<div class="a dc fo" style="left:1194px;top:514px;width:153px;height:26px"><span style="letter-spacing:-0.43px">Cost Per Copy</span></div>
<svg class="a" style="left:531px;top:521px" width="12" height="12"><rect x=".75" y=".75" width="10.500" height="10.500" fill="#fff" stroke="#3a3a44" stroke-width="1.400"/><path d="M3 6H9" stroke="#22222a" stroke-width="1.300"/></svg>
<svg class="a" style="left:574px;top:515.5px" width="19" height="21"><defs><linearGradient id="gck" x1="0" y1="0" x2="1" y2="1"><stop offset="0" stop-color="#ffffff"/><stop offset="1" stop-color="#dcdce0"/></linearGradient></defs><rect x=".6" y="4.600" width="15" height="14.800" fill="url(#gck)" stroke="#a9a9b2" stroke-width="1.200"/><rect x="1.700" y="5.700" width="12.800" height="12.600" fill="none" stroke="#ebebef"/><path d="M1 12.200L2.900 10.600L7 16.200L15.400 1.800L17 2.800L7.800 19.400H6.200Z" fill="#2a2a3c"/></svg>
<div class="a" style="left:529px;top:514px;width:90px;height:26px;border:1.500px dotted #30303a"></div>
<svg class="a" style="left:516px;top:524px" width="6" height="9"><path d="M0.300 0.300L5.600 4.500L0.300 8.700Z" fill="#22222a"/></svg>
<div class="a" style="left:510px;top:798px;width:18px;height:1px;background:#dcdce2"></div>
<div class="a" style="left:529px;top:773px;width:90px;height:26px;background:#fff;border-bottom:1px solid #e2e2e6;border-right:1px solid #dcdce0"></div>
<div class="a dc" style="left:619px;top:773px;width:134px;height:26px"><span style="letter-spacing:-0.46px">CO0000073</span></div>
<div class="a dc" style="left:753px;top:773px;width:145px;height:26px"><span style="letter-spacing:-0.77px">HOP001</span></div>
<div class="a dc" style="left:898px;top:773px;width:203px;height:26px"><span>Hope Works (Pty) Ltd</span></div>
<div class="a dc" style="left:1101px;top:773px;width:93px;height:26px"><span style="letter-spacing:-1.4px">CPC</span></div>
<div class="a dc" style="left:1194px;top:773px;width:153px;height:26px"><span style="letter-spacing:-0.43px">Cost Per Copy</span></div>
<svg class="a" style="left:531px;top:780px" width="12" height="12"><rect x=".75" y=".75" width="10.500" height="10.500" fill="#fff" stroke="#3a3a44" stroke-width="1.400"/><path d="M3 6H9" stroke="#22222a" stroke-width="1.300"/><path d="M6 3V9" stroke="#22222a" stroke-width="1.300"/></svg>
<svg class="a" style="left:574px;top:774.5px" width="19" height="21"><defs><linearGradient id="gck" x1="0" y1="0" x2="1" y2="1"><stop offset="0" stop-color="#ffffff"/><stop offset="1" stop-color="#dcdce0"/></linearGradient></defs><rect x=".6" y="4.600" width="15" height="14.800" fill="url(#gck)" stroke="#a9a9b2" stroke-width="1.200"/><rect x="1.700" y="5.700" width="12.800" height="12.600" fill="none" stroke="#ebebef"/><path d="M1 12.200L2.900 10.600L7 16.200L15.400 1.800L17 2.800L7.800 19.400H6.200Z" fill="#2a2a3c"/></svg>
<div class="a" style="left:510px;top:824px;width:18px;height:1px;background:#dcdce2"></div>
<div class="a" style="left:529px;top:799px;width:90px;height:26px;background:#fff;border-bottom:1px solid #e2e2e6;border-right:1px solid #dcdce0"></div>
<div class="a dc" style="left:619px;top:799px;width:134px;height:26px"><span style="letter-spacing:-0.46px">CO0000078</span></div>
<div class="a dc" style="left:753px;top:799px;width:145px;height:26px"><span style="letter-spacing:-0.77px">HOP001</span></div>
<div class="a dc" style="left:898px;top:799px;width:203px;height:26px"><span>Hope Works (Pty) Ltd</span></div>
<div class="a dc" style="left:1101px;top:799px;width:93px;height:26px"><span style="letter-spacing:-1.4px">CPC</span></div>
<div class="a dc" style="left:1194px;top:799px;width:153px;height:26px"><span style="letter-spacing:-0.43px">Cost Per Copy</span></div>
<svg class="a" style="left:531px;top:806px" width="12" height="12"><rect x=".75" y=".75" width="10.500" height="10.500" fill="#fff" stroke="#3a3a44" stroke-width="1.400"/><path d="M3 6H9" stroke="#22222a" stroke-width="1.300"/><path d="M6 3V9" stroke="#22222a" stroke-width="1.300"/></svg>
<svg class="a" style="left:574px;top:800.5px" width="19" height="21"><defs><linearGradient id="gck" x1="0" y1="0" x2="1" y2="1"><stop offset="0" stop-color="#ffffff"/><stop offset="1" stop-color="#dcdce0"/></linearGradient></defs><rect x=".6" y="4.600" width="15" height="14.800" fill="url(#gck)" stroke="#a9a9b2" stroke-width="1.200"/><rect x="1.700" y="5.700" width="12.800" height="12.600" fill="none" stroke="#ebebef"/><path d="M1 12.200L2.900 10.600L7 16.200L15.400 1.800L17 2.800L7.800 19.400H6.200Z" fill="#2a2a3c"/></svg>
<div class="a" style="left:544px;top:318px;width:54px;height:31px;background:linear-gradient(#fff,#fbfbfc);border:1px solid #b9b9c2;border-bottom:0;border-radius:2px 2px 0 0"></div>
<div class="t" style="left:555.500px;top:326px;letter-spacing:-0.5px">Fees</div>
<div class="a" style="left:539px;top:348px;width:808px;height:105px;background:#fff;border-left:1px solid #b9b9c2;border-top:1px solid #b9b9c2;border-bottom:1px solid #c4c4cc"></div>
<div class="a dh" style="left:540px;top:349px;width:84px;height:24px"><span style="letter-spacing:-0.48px;left:4px">Marked</span></div>
<div class="a dh" style="left:624px;top:349px;width:94px;height:24px"><span style="left:4px">FeeType</span></div>
<div class="a dh" style="left:718px;top:349px;width:629px;height:24px;border-right:0"></div>
<div class="a dc" style="left:540px;top:373px;width:84px;height:26px;background:#fff"></div>
<div class="a dc" style="left:624px;top:373px;width:94px;height:26px;background:#fff"><span style="letter-spacing:-0.8px;left:4px">Mono</span></div>
<svg class="a" style="left:574px;top:374.5px" width="19" height="21"><defs><linearGradient id="gck" x1="0" y1="0" x2="1" y2="1"><stop offset="0" stop-color="#ffffff"/><stop offset="1" stop-color="#dcdce0"/></linearGradient></defs><rect x=".6" y="4.600" width="15" height="14.800" fill="url(#gck)" stroke="#a9a9b2" stroke-width="1.200"/><rect x="1.700" y="5.700" width="12.800" height="12.600" fill="none" stroke="#ebebef"/><rect x="2.800" y="6.800" width="10.600" height="10.400" fill="#fff"/></svg>
<div class="a" style="left:510px;top:372px;width:18px;height:1px;background:#dfdfe4"></div>
<div class="a dc" style="left:540px;top:399px;width:84px;height:26px;background:#ebebeb"></div>
<div class="a dc" style="left:624px;top:399px;width:94px;height:26px;background:#ebebeb"><span style="letter-spacing:-0.63px;left:4px">Colour</span></div>
<svg class="a" style="left:574px;top:400.5px" width="19" height="21"><defs><linearGradient id="gck" x1="0" y1="0" x2="1" y2="1"><stop offset="0" stop-color="#ffffff"/><stop offset="1" stop-color="#dcdce0"/></linearGradient></defs><rect x=".6" y="4.600" width="15" height="14.800" fill="url(#gck)" stroke="#a9a9b2" stroke-width="1.200"/><rect x="1.700" y="5.700" width="12.800" height="12.600" fill="none" stroke="#ebebef"/><path d="M1 12.200L2.900 10.600L7 16.200L15.400 1.800L17 2.800L7.800 19.400H6.200Z" fill="#2a2a3c"/></svg>
<div class="a" style="left:510px;top:398px;width:18px;height:1px;background:#dfdfe4"></div>
<div class="a dc" style="left:540px;top:425px;width:84px;height:26px;background:#ebebeb"></div>
<div class="a dc" style="left:624px;top:425px;width:94px;height:26px;background:#ebebeb"><span style="left:4px">S</span></div>
<svg class="a" style="left:574px;top:426.5px" width="19" height="21"><defs><linearGradient id="gck" x1="0" y1="0" x2="1" y2="1"><stop offset="0" stop-color="#ffffff"/><stop offset="1" stop-color="#dcdce0"/></linearGradient></defs><rect x=".6" y="4.600" width="15" height="14.800" fill="url(#gck)" stroke="#a9a9b2" stroke-width="1.200"/><rect x="1.700" y="5.700" width="12.800" height="12.600" fill="none" stroke="#ebebef"/><path d="M1 12.200L2.900 10.600L7 16.200L15.400 1.800L17 2.800L7.800 19.400H6.200Z" fill="#2a2a3c"/></svg>
<div class="a" style="left:510px;top:424px;width:18px;height:1px;background:#dfdfe4"></div>
<div class="a" style="left:544px;top:552px;width:54px;height:29px;background:linear-gradient(#fff,#fbfbfc);border:1px solid #b9b9c2;border-bottom:0;border-radius:2px 2px 0 0"></div>
<div class="t" style="left:555.500px;top:560px;letter-spacing:-0.5px">Fees</div>
<div class="a" style="left:539px;top:580px;width:808px;height:184px;background:#fff;border-left:1px solid #b9b9c2;border-top:1px solid #b9b9c2;border-bottom:1px solid #c4c4cc"></div>
<div class="a dh" style="left:540px;top:581px;width:84px;height:24px"><span style="letter-spacing:-0.48px;left:4px">Marked</span></div>
<div class="a dh" style="left:624px;top:581px;width:94px;height:24px"><span style="left:4px">FeeType</span></div>
<div class="a dh" style="left:718px;top:581px;width:629px;height:24px;border-right:0"></div>
<div class="a dc" style="left:540px;top:605px;width:84px;height:26px;background:#fff"></div>
<div class="a dc" style="left:624px;top:605px;width:94px;height:26px;background:#fff"><span style="letter-spacing:-0.8px;left:4px">Mono</span></div>
<svg class="a" style="left:574px;top:606.5px" width="19" height="21"><defs><linearGradient id="gck" x1="0" y1="0" x2="1" y2="1"><stop offset="0" stop-color="#ffffff"/><stop offset="1" stop-color="#dcdce0"/></linearGradient></defs><rect x=".6" y="4.600" width="15" height="14.800" fill="url(#gck)" stroke="#a9a9b2" stroke-width="1.200"/><rect x="1.700" y="5.700" width="12.800" height="12.600" fill="none" stroke="#ebebef"/><rect x="2.800" y="6.800" width="10.600" height="10.400" fill="#fff"/></svg>
<div class="a" style="left:510px;top:604px;width:18px;height:1px;background:#dfdfe4"></div>
<div class="a dc" style="left:540px;top:631px;width:84px;height:26px;background:#ebebeb"></div>
<div class="a dc" style="left:624px;top:631px;width:94px;height:26px;background:#ebebeb"><span style="letter-spacing:-0.63px;left:4px">Colour</span></div>
<svg class="a" style="left:574px;top:632.5px" width="19" height="21"><defs><linearGradient id="gck" x1="0" y1="0" x2="1" y2="1"><stop offset="0" stop-color="#ffffff"/><stop offset="1" stop-color="#dcdce0"/></linearGradient></defs><rect x=".6" y="4.600" width="15" height="14.800" fill="url(#gck)" stroke="#a9a9b2" stroke-width="1.200"/><rect x="1.700" y="5.700" width="12.800" height="12.600" fill="none" stroke="#ebebef"/><path d="M1 12.200L2.900 10.600L7 16.200L15.400 1.800L17 2.800L7.800 19.400H6.200Z" fill="#2a2a3c"/></svg>
<div class="a" style="left:510px;top:630px;width:18px;height:1px;background:#dfdfe4"></div>
<div class="a dc" style="left:540px;top:657px;width:84px;height:26px;background:#ebebeb"></div>
<div class="a dc" style="left:624px;top:657px;width:94px;height:26px;background:#ebebeb"><span style="left:4px">S</span></div>
<svg class="a" style="left:574px;top:658.5px" width="19" height="21"><defs><linearGradient id="gck" x1="0" y1="0" x2="1" y2="1"><stop offset="0" stop-color="#ffffff"/><stop offset="1" stop-color="#dcdce0"/></linearGradient></defs><rect x=".6" y="4.600" width="15" height="14.800" fill="url(#gck)" stroke="#a9a9b2" stroke-width="1.200"/><rect x="1.700" y="5.700" width="12.800" height="12.600" fill="none" stroke="#ebebef"/><path d="M1 12.200L2.900 10.600L7 16.200L15.400 1.800L17 2.800L7.800 19.400H6.200Z" fill="#2a2a3c"/></svg>
<div class="a" style="left:510px;top:656px;width:18px;height:1px;background:#dfdfe4"></div>
<div class="a dc" style="left:540px;top:683px;width:84px;height:27px;background:#ebebeb"></div>
<div class="a dc" style="left:624px;top:683px;width:94px;height:27px;background:#ebebeb"><span style="letter-spacing:-0.8px;left:4px">Mono</span></div>
<svg class="a" style="left:574px;top:684.5px" width="19" height="21"><defs><linearGradient id="gck" x1="0" y1="0" x2="1" y2="1"><stop offset="0" stop-color="#ffffff"/><stop offset="1" stop-color="#dcdce0"/></linearGradient></defs><rect x=".6" y="4.600" width="15" height="14.800" fill="url(#gck)" stroke="#a9a9b2" stroke-width="1.200"/><rect x="1.700" y="5.700" width="12.800" height="12.600" fill="none" stroke="#ebebef"/><rect x="2.800" y="6.800" width="10.600" height="10.400" fill="#fff"/></svg>
<div class="a" style="left:510px;top:682px;width:18px;height:1px;background:#dfdfe4"></div>
<div class="a dc" style="left:540px;top:710px;width:84px;height:26px;background:#ebebeb"></div>
<div class="a dc" style="left:624px;top:710px;width:94px;height:26px;background:#ebebeb"><span style="letter-spacing:-0.63px;left:4px">Colour</span></div>
<svg class="a" style="left:574px;top:711.5px" width="19" height="21"><defs><linearGradient id="gck" x1="0" y1="0" x2="1" y2="1"><stop offset="0" stop-color="#ffffff"/><stop offset="1" stop-color="#dcdce0"/></linearGradient></defs><rect x=".6" y="4.600" width="15" height="14.800" fill="url(#gck)" stroke="#a9a9b2" stroke-width="1.200"/><rect x="1.700" y="5.700" width="12.800" height="12.600" fill="none" stroke="#ebebef"/><path d="M1 12.200L2.900 10.600L7 16.200L15.400 1.800L17 2.800L7.800 19.400H6.200Z" fill="#2a2a3c"/></svg>
<div class="a" style="left:510px;top:709px;width:18px;height:1px;background:#dfdfe4"></div>
<div class="a dc" style="left:540px;top:736px;width:84px;height:26px;background:#ebebeb"></div>
<div class="a dc" style="left:624px;top:736px;width:94px;height:26px;background:#ebebeb"><span style="left:4px">S</span></div>
<svg class="a" style="left:574px;top:737.5px" width="19" height="21"><defs><linearGradient id="gck" x1="0" y1="0" x2="1" y2="1"><stop offset="0" stop-color="#ffffff"/><stop offset="1" stop-color="#dcdce0"/></linearGradient></defs><rect x=".6" y="4.600" width="15" height="14.800" fill="url(#gck)" stroke="#a9a9b2" stroke-width="1.200"/><rect x="1.700" y="5.700" width="12.800" height="12.600" fill="none" stroke="#ebebef"/><path d="M1 12.200L2.900 10.600L7 16.200L15.400 1.800L17 2.800L7.800 19.400H6.200Z" fill="#2a2a3c"/></svg>
<div class="a" style="left:510px;top:735px;width:18px;height:1px;background:#dfdfe4"></div>
<div class="t st" style="left:15px;top:836.500px;letter-spacing:-0.35px">Open Windows</div>
<svg class="a" style="left:109.500px;top:842px;z-index:6" width="9" height="6"><path d="M0.2 0.3H8.600L4.400 4.900Z" fill="#26262e"/></svg>
<div class="a ss" style="left:853px"></div><div class="a ss" style="left:970px"></div><div class="a ss" style="left:1061px"></div><div class="a ss" style="left:1191px"></div>
<div class="t st" style="letter-spacing:-0.4px;left:866px;top:836.500px">User : JulandaK</div>
<div class="t st" style="left:982px;top:836.500px">23/11/2020</div>
<div class="t st" style="letter-spacing:0.05px;left:1072px;top:836.500px">Version : 2.4.0.11</div>
<div class="t st" style="letter-spacing:-0.56px;left:1202px;top:836.500px">Example Company</div>
<svg class="a" style="left:1330px;top:842.500px;z-index:6" width="16" height="16"><path d="M14.500 1.500L1.500 14.500M14.500 6.500L6.500 14.500M14.500 11L11 14.500" stroke="#a0a0a8" stroke-width="1.400"/></svg>
<div class="a" style="left:0;top:862px;width:1352px;height:5px;background:#c9c9d1;z-index:7;border-bottom:1px solid #a6a8b4"></div>
<svg class="a" style="left:0;top:0;z-index:20" width="1352" height="867" viewBox="0 0 1352 867" font-family="Liberation Sans,sans-serif">
<rect x="508.00" y="185.80" width="841.00" height="639.80" fill="none" stroke="#3d66e0" stroke-width="3.2"/>
<rect x="527.20" y="281.90" width="19.80" height="24.20" fill="none" stroke="#3d66e0" stroke-width="3"/>
<rect x="545.10" y="318.10" width="53.40" height="27.40" fill="none" stroke="#3d66e0" stroke-width="3"/>
<rect x="540.20" y="347.90" width="804.30" height="102.00" fill="none" stroke="#3d66e0" stroke-width="3"/>
<path d="M663.4 374H714.9V395.4H663.4" fill="none" stroke="#3d66e0" stroke-width="3"/>
<line x1="920.0" y1="386.6" x2="618.3" y2="333.9" stroke="#3d66e0" stroke-width="2.6"/>
<polygon points="603.0,331.2 621.4,327.7 619.1,340.7" fill="#3d66e0"/>
<line x1="716.4" y1="384.8" x2="920.0" y2="395.4" stroke="#3d66e0" stroke-width="2.6"/>
<line x1="920.0" y1="391.0" x2="716.0" y2="616.5" stroke="#3d66e0" stroke-width="2.6"/>
<path d="M646.3 606.2H714.9V628.8H646.3" fill="none" stroke="#3d66e0" stroke-width="3"/>
<rect x="566.20" y="606.20" width="33.60" height="155.10" fill="none" stroke="#3d66e0" stroke-width="3"/>
<rect x="527.20" y="772.70" width="19.80" height="25.10" fill="none" stroke="#3d66e0" stroke-width="3"/>
<line x1="428.8" y1="773.0" x2="547.7" y2="706.4" stroke="#3d66e0" stroke-width="2.6"/>
<polygon points="560.8,699.1 549.1,713.1 542.8,701.7" fill="#3d66e0"/>
<line x1="762.2" y1="729.0" x2="563.9" y2="775.2" stroke="#3d66e0" stroke-width="2.6"/>
<polygon points="548.8,778.7 564.4,768.5 567.3,781.0" fill="#3d66e0"/>
<line x1="459.0" y1="207.7" x2="518.3" y2="268.9" stroke="#3d66e0" stroke-width="2.6"/>
<polygon points="528.7,279.7 512.2,272.0 521.5,263.0" fill="#3d66e0"/>
<circle cx="920.2" cy="391" r="14.8" fill="#3d66e0"/>
<text x="920.2" y="396.8" font-size="16.500" text-anchor="middle" fill="#0a0a14">2</text>
<circle cx="428.8" cy="773" r="14.8" fill="#3d66e0"/>
<text x="428.8" y="778.8" font-size="16.500" text-anchor="middle" fill="#0a0a14">3</text>
<circle cx="762.2" cy="729" r="14.8" fill="#3d66e0"/>
<text x="762.2" y="734.8" font-size="16.500" text-anchor="middle" fill="#0a0a14">1</text>
<circle cx="459" cy="207.7" r="14.8" fill="#3d66e0"/>
<text x="459" y="213.5" font-size="16.500" text-anchor="middle" fill="#0a0a14">4</text>
</svg>
</body>
</html>
